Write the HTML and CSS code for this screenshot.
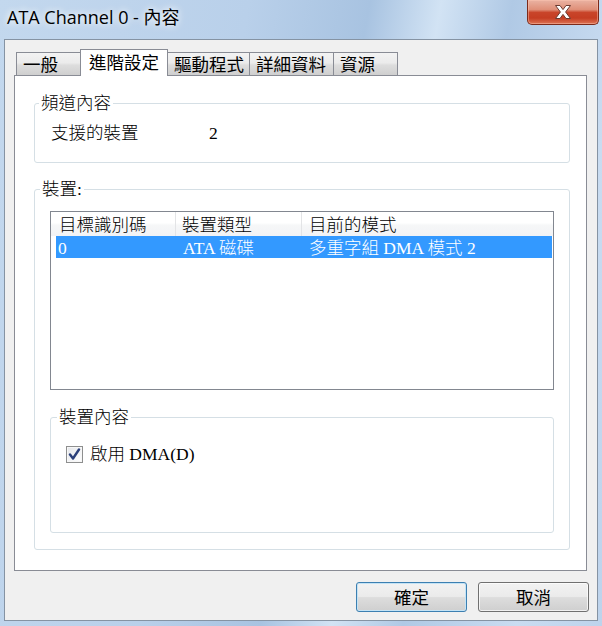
FILE: index.html
```html
<!DOCTYPE html>
<html lang="zh-Hant">
<head>
<meta charset="utf-8">
<title>ATA Channel 0 - 內容</title>
<link rel="stylesheet" href="styles.css">
</head>
<body>
<div class="window">
  <div class="titlebar">
    <span class="title">ATA Channel 0 - 內容</span>
    <button class="close" aria-label="關閉">
      <svg width="24" height="18" viewBox="0 0 24 18">
        <path d="M4.5 2.5 H9 L12 6.6 L15 2.5 H19.5 L14.6 9 L19.5 15.5 H15 L12 11.4 L9 15.5 H4.5 L9.4 9 Z" fill="#fff" stroke="#6b3a30" stroke-width="1" stroke-linejoin="round"/>
      </svg>
    </button>
  </div>
  <div class="client">
    <div class="tabs">
      <div class="tab t1">一般</div>
      <div class="tab t2 active">進階設定</div>
      <div class="tab t3">驅動程式</div>
      <div class="tab t4">詳細資料</div>
      <div class="tab t5">資源</div>
    </div>
    <div class="panel">
      <fieldset class="group g1">
        <legend>頻道內容</legend>
        <div class="prop"><span class="k">支援的裝置</span><span class="v">2</span></div>
      </fieldset>
      <fieldset class="group g2">
        <legend>裝置:</legend>
        <div class="g2body">
          <div class="list">
            <div class="lhead">
              <div class="h h1">目標識別碼</div>
              <div class="h h2">裝置類型</div>
              <div class="h h3">目前的模式</div>
            </div>
            <div class="lrow sel">
              <div class="c c1">0</div>
              <div class="c c2">ATA 磁碟</div>
              <div class="c c3">多重字組 DMA 模式 2</div>
            </div>
          </div>
          <fieldset class="group g3">
            <legend>裝置內容</legend>
            <label class="check">
              <span class="box">
                <svg width="13" height="13" viewBox="0 0 13 13">
                  <path d="M2 6.5 L5 10.5 L11 1.5" fill="none" stroke="#2a3f7a" stroke-width="2.4" stroke-linecap="round" stroke-linejoin="round"/>
                </svg>
              </span>
              <span class="ctext">啟用 DMA(D)</span>
            </label>
          </fieldset>
        </div>
      </fieldset>
    </div>
    <div class="buttons">
      <button class="btn default">確定</button>
      <button class="btn">取消</button>
    </div>
  </div>
</div>
</body>
</html>
```
FILE: styles.css
```css
* { box-sizing: border-box; }
html, body { margin: 0; padding: 0; }
body { width: 602px; height: 626px; overflow: hidden; }

.window {
  width: 602px;
  height: 626px;
  display: flex;
  flex-direction: column;
  background: linear-gradient(100deg, #c3d8ee 0%, #b9d0ea 35%, #a8c3e1 52%, #d2e3f4 62%, #b0c9e5 72%, #c9dcf1 88%, #bdd3ec 100%);
  font-family: "Liberation Serif", "Noto Sans CJK TC", serif;
  font-size: 17.5px;
  font-weight: 300;
  color: #000;
}

.titlebar {
  height: 39px;
  display: flex;
  justify-content: space-between;
  align-items: flex-start;
  flex: none;
}
.title {
  font-family: "Open Sans", "Noto Sans CJK TC", sans-serif;
  font-weight: 400;
  font-size: 18px;
  line-height: 22px;
  padding: 6px 0 0 7px;
  text-shadow: 0 0 6px rgba(255,255,255,0.9), 0 0 10px rgba(255,255,255,0.7);
}
.close {
  width: 72px;
  height: 25px;
  margin-right: 3px;
  padding: 0;
  border: 1px solid #7c2a1a;
  border-top: none;
  border-radius: 0 0 5px 5px;
  background: linear-gradient(#eab3a3 0%, #df8f78 40%, #c9452a 52%, #c53d22 75%, #dc7354 100%);
  box-shadow: inset 0 0 0 1px rgba(255,200,180,0.45);
  display: flex;
  align-items: center;
  justify-content: center;
}

.client {
  flex: 1;
  margin: 0 4px 5px;
  border: 1px solid #8593a3;
  background: #f0f0f0;
  display: flex;
  flex-direction: column;
  padding: 9px 10px 8px 9px;
}

.tabs {
  display: flex;
  align-items: flex-start;
  height: 27px;
  margin-bottom: -1px;
  padding-left: 2px;
  position: relative;
  z-index: 1;
  font-family: "Noto Sans CJK TC", sans-serif;
  font-weight: 400;
}
.tab {
  height: 23px;
  margin-top: 3px;
  margin-right: -1px;
  border: 1px solid #898c95;
  border-bottom: none;
  background: linear-gradient(#f3f3f3 0%, #ebebeb 45%, #dddddd 55%, #cfcfcf 100%);
  line-height: 21px;
  padding-left: 6px;
  white-space: nowrap;
}
.t1 { width: 66px; }
.t2 { width: 88px; }
.t3 { width: 83px; }
.t4 { width: 85px; }
.t5 { width: 65px; }
.tab.active {
  height: 27px;
  margin-top: 0;
  margin-left: -1px;
  background: #fff;
  padding-left: 8px;
  line-height: 24px;
}

.panel {
  height: 496px;
  flex: none;
  border: 1px solid #898c95;
  background: #fff;
  padding: 17px 16px 0 19px;
}

.group {
  margin: 0;
  padding: 0;
  min-width: 0;
  border: 1px solid #d5dfe5;
  border-radius: 3px;
}
.group legend {
  padding: 0 2px;
  margin-left: 4px;
  line-height: 20px;
}
.g2 legend { margin-left: 5px; }
.g3 legend { margin-left: 6px; }

.prop {
  display: flex;
  line-height: 20px;
  padding: 10px 0 19px 16px;
}
.k { width: 158px; }

.g2 { margin-top: 16px; }
.g2body { padding: 12px 15px 16px 15px; }

.list {
  height: 179px;
  border: 1px solid #828790;
  background: #fff;
}
.lhead {
  display: flex;
  height: 24px;
  line-height: 26px;
  background: linear-gradient(#ffffff 0%, #ffffff 45%, #f6f7f8 55%, #f2f3f5 100%);
}
.h { border-right: 1px solid #e3e4e6; white-space: nowrap; }
.h1 { width: 125px; padding-left: 8px; }
.h2 { width: 126px; padding-left: 6px; }
.h3 { flex: 1; border-right: none; padding-left: 7px; }

.lrow {
  display: flex;
  height: 22px;
  line-height: 24px;
  margin: 0 1px 0 5px;
  white-space: nowrap;
}
.lrow.sel { background: #3399ff; color: #fff; }
.c1 { width: 120px; padding-left: 2px; }
.c2 { width: 126px; padding-left: 7px; }
.c3 { flex: 1; padding-left: 7px; }

.g3 { margin-top: 17px; }
.check {
  display: flex;
  align-items: center;
  height: 20px;
  margin: 17px 0 68px 15px;
  line-height: 20px;
}
.box {
  width: 17px;
  height: 17px;
  border: 1px solid #8e8f8f;
  background: linear-gradient(135deg, #e4e6ea 0%, #f4f5f7 60%, #ffffff 100%);
  box-shadow: inset 0 0 0 1px #f7f7f7;
  display: flex;
  align-items: center;
  justify-content: center;
  margin-right: 7px;
}

.buttons {
  display: flex;
  justify-content: flex-end;
  gap: 11px;
  margin-top: 11px;
  margin-right: -2px;
}
.btn {
  width: 111px;
  height: 30px;
  padding: 0;
  border: 1px solid #707070;
  border-radius: 3px;
  background: linear-gradient(#f2f2f2 0%, #ebebeb 48%, #dddddd 52%, #cfcfcf 100%);
  box-shadow: inset 0 0 0 1px rgba(255,255,255,0.7);
  font-family: "Noto Sans CJK TC", sans-serif;
  font-weight: 400;
  font-size: 17.5px;
  line-height: 26px;
  color: #000;
}
.btn.default {
  border-color: #3c7fb1;
  box-shadow: inset 0 0 0 1px #c4e3f5;
}
```
